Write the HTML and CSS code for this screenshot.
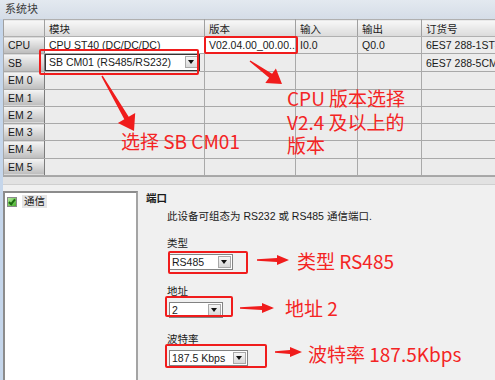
FILE: index.html
```html
<!DOCTYPE html>
<html lang="zh-CN">
<head>
    <meta charset="UTF-8">
    <meta name="viewport" content="width=device-width, initial-scale=1.0">
    <title>系统块</title>
    <link rel="stylesheet" href="styles.css">
</head>
<body>
    <div class="window">
        <div class="titlebar">系统块</div>
        <div class="content">
            <div class="grid-wrap">
                <table class="sys-table">
                    <colgroup>
                        <col class="c-head"><col class="c-module"><col class="c-ver"><col class="c-in"><col class="c-out"><col class="c-order">
                    </colgroup>
                    <tr class="head"><th></th><th>模块</th><th>版本</th><th>输入</th><th>输出</th><th>订货号</th></tr>
                    <tr><th class="rowhead">CPU</th><td class="white">CPU ST40 (DC/DC/DC)</td><td class="white">V02.04.00_00.00...</td><td>I0.0</td><td>Q0.0</td><td>6ES7 288-1ST40-0AA0</td></tr>
                    <tr><th class="rowhead">SB</th><td class="edit"><div class="combo in-cell">SB CM01 (RS485/RS232)<span class="drop"></span></div></td><td></td><td></td><td></td><td>6ES7 288-5CM01-0AA0</td></tr>
                    <tr><th class="rowhead">EM 0</th><td></td><td></td><td></td><td></td><td></td></tr>
                    <tr><th class="rowhead">EM 1</th><td></td><td></td><td></td><td></td><td></td></tr>
                    <tr><th class="rowhead">EM 2</th><td></td><td></td><td></td><td></td><td></td></tr>
                    <tr><th class="rowhead">EM 3</th><td></td><td></td><td></td><td></td><td></td></tr>
                    <tr><th class="rowhead">EM 4</th><td></td><td></td><td></td><td></td><td></td></tr>
                    <tr><th class="rowhead">EM 5</th><td></td><td></td><td></td><td></td><td></td></tr>
                </table>
            </div>
            <div class="splitter"></div>
            <div class="lower">
                <div class="tree">
                    <div class="tree-item"><span class="check"></span><span class="tree-label">通信</span></div>
                </div>
                <div class="props">
                    <div class="group-title">端口</div>
                    <div class="desc">此设备可组态为 RS232 或 RS485 通信端口.</div>
                    <div class="field-label first">类型</div>
                    <div class="combo w-type">RS485<span class="drop"></span></div>
                    <div class="field-label">地址</div>
                    <div class="combo w-addr">2<span class="drop"></span></div>
                    <div class="field-label">波特率</div>
                    <div class="combo w-baud">187.5 Kbps<span class="drop"></span></div>
                </div>
            </div>
        </div>

        <svg class="marks" width="495" height="380" viewBox="0 0 495 380">
            <g fill="none" stroke="#f01c1c" stroke-width="2">
                <rect x="40" y="50" width="158" height="24" rx="1"/>
                <rect x="205" y="37" width="92" height="16" rx="1"/>
                <rect x="169" y="252" width="78" height="21" rx="1"/>
                <rect x="166" y="297" width="66" height="19" rx="1"/>
                <rect x="166" y="345" width="100" height="22" rx="1"/>
            </g>
            <g fill="#f01c1c">
                <polygon points="102.6,75.6 128.7,116.7 135.2,113 134,131 117.9,123 124.3,119.3 101.4,76.4"/>
                <polygon points="250.4,60.4 272.1,73.8 275.9,68.5 282,84 265.3,83.1 269.1,77.8 249.6,61.6"/>
                <polygon points="257,259.3 277,258 277,255 289,260 277,265 277,262 257,260.7"/>
                <polygon points="240,307.3 262,306 262,303 274,308 262,313 262,310 240,308.7"/>
                <polygon points="275,351.3 290,350 290,347 302,352 290,357 290,354 275,352.7"/>
            </g>
        </svg>
        <div class="note note-sb">选择 SB CM01</div>
        <div class="note note-cpu">CPU 版本选择<br>V2.4 及以上的<br>版本</div>
        <div class="note note-type">类型 RS485</div>
        <div class="note note-addr">地址 2</div>
        <div class="note note-baud">波特率 187.5Kbps</div>
    </div>
</body>
</html>
```

FILE: styles.css
```css
body {
    margin: 0;
    background: #f0f0f0;
}
.window {
    position: relative;
    width: 495px;
    height: 380px;
    overflow: hidden;
    background: #f0f0f0;
    font-family: "Liberation Sans", "Noto Sans CJK SC", sans-serif;
    font-size: 10.5px;
    color: #1a1a1a;
}
.titlebar {
    height: 19px;
    line-height: 19px;
    padding-left: 5px;
    background: linear-gradient(#e3e9f0, #d5dde7);
    color: #3a3a3a;
    font-size: 11px;
}
.content {
    border-left: 3px solid #c5d6eb;
    height: 361px;
}
.grid-wrap {
    overflow: hidden;
}
.sys-table {
    border-collapse: collapse;
    table-layout: fixed;
    width: 560px;
}
.c-head { width: 41px; }
.c-module { width: 160px; }
.c-ver { width: 91px; }
.c-in { width: 62px; }
.c-out { width: 64px; }
.c-order { width: 142px; }
.sys-table th, .sys-table td {
    height: 16.25px;
    padding: 0 0 0 4px;
    border: 1px solid #a9a9a9;
    white-space: nowrap;
    overflow: hidden;
    text-align: left;
    font-weight: normal;
}
.sys-table .head th {
    height: 16px;
}
.sys-table td {
    background: #ececec;
}
.sys-table td.white {
    background: #fff;
}
.sys-table td.edit {
    padding: 0;
    background: #ececec;
}
.head th {
    background: linear-gradient(#f8f8f8, #dadada);
    border-color: #b0b0b0 #a0a0a0;
}
.rowhead {
    background: linear-gradient(#f6f6f6, #bcbcbc);
    border-right-color: #7c7c7c !important;
}
.splitter {
    height: 7px;
    background: #e2e2e2;
    border-top: 1px solid #a6a6a6;
    border-bottom: 1px solid #cfcfcf;
    margin-bottom: 6px;
}
.lower {
    display: flex;
}
.tree {
    width: 131px;
    height: 200px;
    background: #fff;
    border-left: 2px solid #8c8c8c;
    border-top: 2px solid #8c8c8c;
    border-right: 2px solid #a4a4a4;
}
.tree-item {
    display: flex;
    align-items: center;
    margin: 2px 0 0 2px;
    height: 14px;
}
.check {
    width: 8px;
    height: 8px;
    border: 1px solid #8a8a8a;
    background: linear-gradient(135deg, #b4ec9c, #48b02c);
    position: relative;
}
.check::after {
    content: "";
    position: absolute;
    left: 2px;
    top: 0;
    width: 2px;
    height: 5px;
    border: solid #1d6b12;
    border-width: 0 2px 2px 0;
    transform: rotate(40deg);
}
.tree-label {
    margin-left: 5px;
    padding: 0 2px;
    background: #e6e6e6;
    line-height: 13px;
}
.props {
    flex: 1;
    padding-left: 8px;
}
.group-title {
    font-weight: bold;
    line-height: 14px;
}
.desc {
    margin: 4px 0 0 21px;
    line-height: 14px;
}
.field-label {
    margin: 14px 0 0 21px;
    line-height: 14px;
}
.field-label.first {
    margin-top: 13px;
}
.combo {
    position: relative;
    box-sizing: border-box;
    height: 16px;
    line-height: 14px;
    margin: 4px 0 0 23px;
    padding-left: 2px;
    background: #fff;
    border: 1px solid #828282;
}
.w-type { width: 64px; }
.w-addr { width: 54px; }
.w-baud { width: 79px; }
.combo .drop {
    position: absolute;
    right: 1px;
    top: 1px;
    width: 13px;
    height: 12px;
    background: linear-gradient(#f6f6f6, #d8d8d8);
    border: 1px solid #a8a8a8;
    box-sizing: border-box;
}
.combo .drop::after {
    content: "";
    position: absolute;
    left: 2px;
    top: 3px;
    border: 3.5px solid transparent;
    border-top: 4px solid #111;
    border-bottom: 0;
}
.combo.in-cell {
    margin: 0;
    width: 155px;
    height: 17px;
    line-height: 15px;
    padding-left: 3px;
    border-color: #333;
}
.marks {
    position: absolute;
    left: 0;
    top: 0;
}
.note {
    position: absolute;
    color: #f42424;
    font-family: "Noto Sans CJK SC", sans-serif;
    font-size: 19px;
    line-height: 23.5px;
    white-space: nowrap;
}
.note-sb { left: 121px; top: 129px; }
.note-cpu { left: 287px; top: 86px; }
.note-type { left: 297px; top: 249px; }
.note-addr { left: 285px; top: 296px; }
.note-baud { left: 308px; top: 342px; }
```
